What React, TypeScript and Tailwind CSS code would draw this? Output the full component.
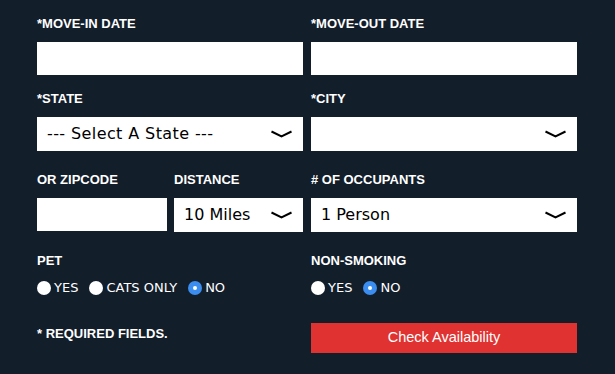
import type { ReactNode } from 'react';

const sans = { fontFamily: '"Liberation Sans", Arial, sans-serif' };
const wide = { fontFamily: '"DejaVu Sans", "Liberation Sans", sans-serif' };

function Label({ children }: { children: ReactNode }) {
  return (
    <div style={sans} className="text-[13px] leading-[14px] font-bold text-white uppercase mb-[11px]">
      {children}
    </div>
  );
}

function Chevron() {
  return (
    <svg width="23" height="8" viewBox="0 0 23 8" className="shrink-0" aria-hidden="true">
      <polyline points="1.5,1.5 11.5,6.5 21.5,1.5" fill="none" stroke="#000" strokeWidth="2" />
    </svg>
  );
}

function TextBox() {
  return <div className="h-[33px] bg-white" />;
}

function SelectBox({ value, spaced }: { value?: string; spaced?: boolean }) {
  return (
    <div className="h-[34px] bg-white flex items-center justify-between pl-[10px] pr-[10px]">
      <span
        style={wide}
        className={
          spaced
            ? 'text-[16px] text-black whitespace-nowrap tracking-[0.4px]'
            : 'text-[16px] text-black whitespace-nowrap'
        }
      >
        {value}
      </span>
      <Chevron />
    </div>
  );
}

function Radio({ label, checked }: { label: string; checked?: boolean }) {
  return (
    <label className="flex items-center gap-[3px]">
      {checked ? (
        <span className="w-[14px] h-[14px] rounded-full bg-[#3b8ef0] flex items-center justify-center">
          <span className="w-[4px] h-[4px] rounded-full bg-white" />
        </span>
      ) : (
        <span className="w-[14px] h-[14px] rounded-full bg-white" />
      )}
      <span style={wide} className="text-[13px] leading-[14px] text-white uppercase">
        {label}
      </span>
    </label>
  );
}

export default function App() {
  return (
    <div className="w-[615px] h-[374px] bg-[#131e2b] px-[37px] pt-[17px] pr-[38px]">
      <div className="grid grid-cols-2 gap-x-2">
        <div>
          <Label>*Move-in Date</Label>
          <TextBox />
        </div>
        <div>
          <Label>*Move-out Date</Label>
          <TextBox />
        </div>
      </div>

      <div className="grid grid-cols-2 gap-x-2 mt-[17px]">
        <div>
          <Label>*State</Label>
          <SelectBox value="--- Select A State ---" spaced />
        </div>
        <div>
          <Label>*City</Label>
          <SelectBox />
        </div>
      </div>

      <div className="grid grid-cols-2 gap-x-2 mt-[22px]">
        <div className="grid grid-cols-[130px_1fr] gap-x-[7px]">
          <div>
            <Label>Or Zipcode</Label>
            <TextBox />
          </div>
          <div>
            <Label>Distance</Label>
            <SelectBox value="10 Miles" />
          </div>
        </div>
        <div>
          <Label># of Occupants</Label>
          <SelectBox value="1 Person" />
        </div>
      </div>

      <div className="grid grid-cols-2 gap-x-2 mt-[22px]">
        <div>
          <Label>Pet</Label>
          <div className="flex items-center gap-[11px] mt-[13px]">
            <Radio label="Yes" />
            <Radio label="Cats Only" />
            <Radio label="No" checked />
          </div>
        </div>
        <div>
          <Label>Non-Smoking</Label>
          <div className="flex items-center gap-[11px] mt-[13px]">
            <Radio label="Yes" />
            <Radio label="No" checked />
          </div>
        </div>
      </div>

      <div className="grid grid-cols-2 gap-x-2 mt-[28px]">
        <div style={sans} className="pt-[4px] text-[13px] leading-[14px] font-bold text-white uppercase">
          * Required Fields.
        </div>
        <button
          type="button"
          style={sans}
          className="h-[30px] bg-[#e03331] text-white text-[14.5px] text-center"
        >
          Check Availability
        </button>
      </div>
    </div>
  );
}
